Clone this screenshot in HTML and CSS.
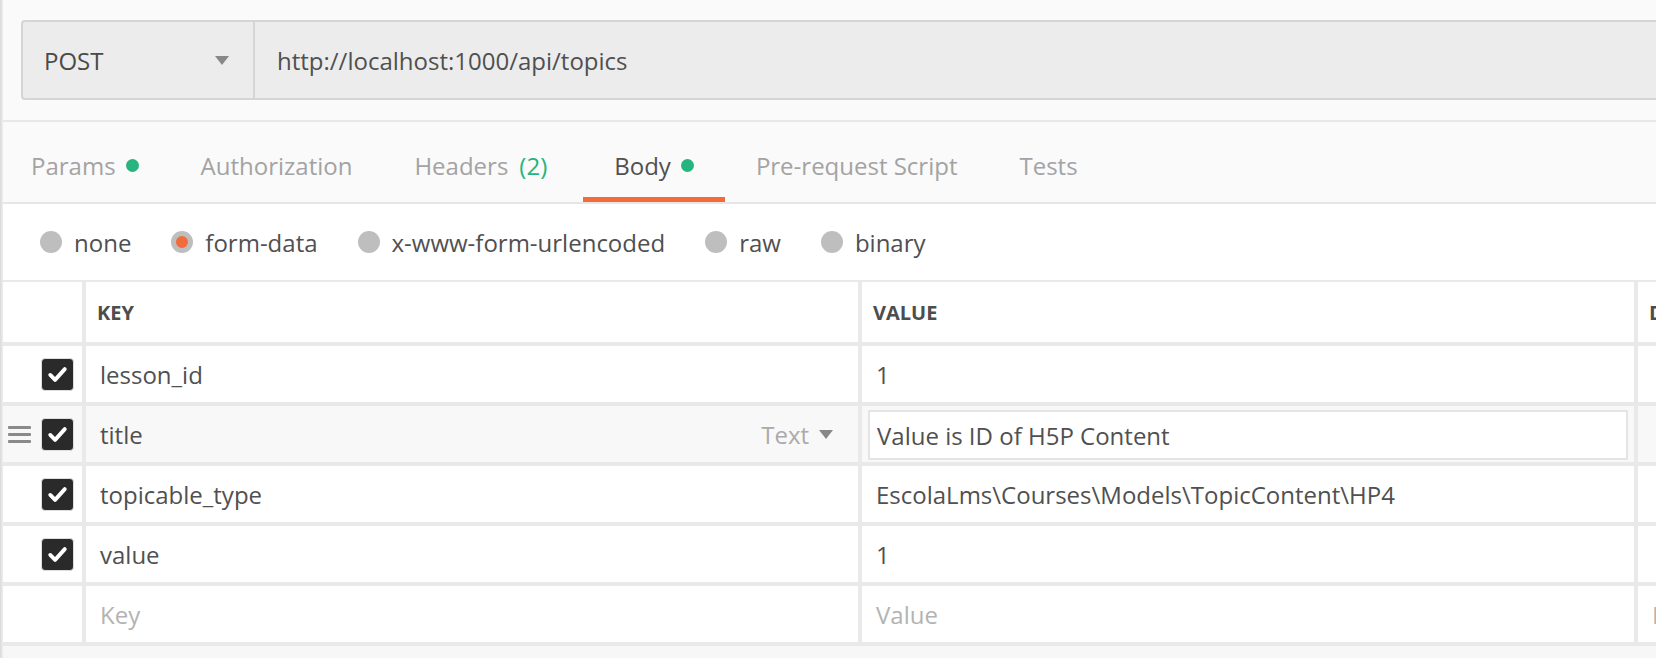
FILE: index.html
```html
<!DOCTYPE html>
<html>
<head>
<meta charset="utf-8">
<link rel="stylesheet" href="styles.css">
</head>
<body>
<div class="app">
  <div class="edge"></div>
  <div class="main">
    <div class="top">
      <div class="urlbar">
        <div class="method"><span>POST</span><span class="caret"></span></div>
        <div class="url">http://localhost:1000/api/topics</div>
      </div>
    </div>
    <div class="tabs">
      <div class="tab">Params<span class="dot"></span></div>
      <div class="tab">Authorization</div>
      <div class="tab headers">Headers<span class="count">(2)</span></div>
      <div class="tab active">Body<span class="dot"></span></div>
      <div class="tab">Pre-request Script</div>
      <div class="tab">Tests</div>
    </div>
    <div class="modes">
      <div class="mode"><span class="radio"></span>none</div>
      <div class="mode"><span class="radio on"></span>form-data</div>
      <div class="mode"><span class="radio"></span>x-www-form-urlencoded</div>
      <div class="mode"><span class="radio"></span>raw</div>
      <div class="mode"><span class="radio"></span>binary</div>
    </div>
    <div class="kv">
      <div class="cell head check"></div>
      <div class="cell head">KEY</div>
      <div class="cell head">VALUE</div>
      <div class="cell head">DESCRIPTION</div>

      <div class="cell check"><span class="cb"><svg viewBox="0 0 32 32"><path d="M8.5 16.5 L13.5 21.5 L23.5 10.5"/></svg></span></div>
      <div class="cell">lesson_id</div>
      <div class="cell">1</div>
      <div class="cell"></div>

      <div class="cell check hl"><span class="drag"><i></i><i></i><i></i></span><span class="cb"><svg viewBox="0 0 32 32"><path d="M8.5 16.5 L13.5 21.5 L23.5 10.5"/></svg></span></div>
      <div class="cell hl keycell"><span>title</span><span class="type">Text<span class="caret small"></span></span></div>
      <div class="cell hl valcell"><div class="input">Value is ID of H5P Content</div></div>
      <div class="cell hl"></div>

      <div class="cell check"><span class="cb"><svg viewBox="0 0 32 32"><path d="M8.5 16.5 L13.5 21.5 L23.5 10.5"/></svg></span></div>
      <div class="cell">topicable_type</div>
      <div class="cell">EscolaLms\Courses\Models\TopicContent\HP4</div>
      <div class="cell"></div>

      <div class="cell check"><span class="cb"><svg viewBox="0 0 32 32"><path d="M8.5 16.5 L13.5 21.5 L23.5 10.5"/></svg></span></div>
      <div class="cell">value</div>
      <div class="cell">1</div>
      <div class="cell"></div>

      <div class="cell check"></div>
      <div class="cell ph">Key</div>
      <div class="cell ph">Value</div>
      <div class="cell ph">Description</div>
    </div>
    <div class="footer"></div>
  </div>
</div>
</body>
</html>
```
FILE: styles.css
```css
html, body {
  margin: 0;
  padding: 0;
  height: 100%;
}
body {
  font-family: "Open Sans", "Liberation Sans", sans-serif;
  font-size: 24px;
  color: #505050;
  background: #f7f7f7;
}
.app {
  display: flex;
  min-height: 100vh;
  overflow: hidden;
}
.edge {
  width: 3px;
  flex: none;
  background: linear-gradient(to right, #d9d9d9, #efefef);
}
.main {
  flex: 1;
  min-width: 0;
  overflow: hidden;
  display: flex;
  flex-direction: column;
}
.top {
  background: #fafafa;
  padding: 20px 0 20px 18px;
  border-bottom: 2px solid #e8e8e8;
}
.urlbar {
  display: flex;
  height: 76px;
  border: 2px solid #d5d5d5;
  border-right: none;
  border-radius: 4px 0 0 4px;
  background: #ececec;
  margin-right: -10px;
}
.method {
  flex: none;
  display: flex;
  align-items: center;
  justify-content: space-between;
  padding: 0 24px 0 21px;
  border-right: 2px solid #d5d5d5;
  color: #4a4a4a;
  box-sizing: content-box;
  width: 185px;
}
.caret {
  width: 0;
  height: 0;
  border-left: 7px solid transparent;
  border-right: 7px solid transparent;
  border-top: 9px solid #888;
}
.url {
  display: flex;
  align-items: center;
  padding-left: 22px;
  color: #505050;
}
.tabs {
  display: flex;
  background: #fafafa;
  border-bottom: 2px solid #e6e6e6;
  box-sizing: border-box;
  height: 82px;
}
.tab {
  display: flex;
  align-items: center;
  padding: 12px 31px 0;
  color: #a3a3a3;
  border-bottom: 5px solid transparent;
  white-space: pre;
}
.tab:first-child {
  padding-left: 28px;
}
.tab.headers {
  padding-right: 36px;
}
.tab.active {
  color: #505050;
  border-bottom-color: #f26b3a;
}
.dot {
  width: 13px;
  height: 13px;
  border-radius: 50%;
  background: #26b47f;
  margin-left: 10px;
}
.count {
  color: #26b47f;
  margin-left: 11px;
}
.modes {
  display: flex;
  align-items: center;
  height: 76px;
  background: #fff;
  padding-left: 37px;
  gap: 40px;
}
.mode {
  display: flex;
  align-items: center;
  color: #505050;
}
.radio {
  width: 22px;
  height: 22px;
  border-radius: 50%;
  background: #bebebe;
  margin-right: 12px;
  box-sizing: border-box;
}
.radio.on {
  background: #f26b3a;
  border: 5px solid #bebebe;
}
.kv {
  display: grid;
  grid-template-columns: 79px 772px 772px 400px;
  grid-template-rows: 60px repeat(5, 56px);
  gap: 4px;
  background: #e9e9e9;
  border-top: 2px solid #e9e9e9;
  border-bottom: 4px solid #e9e9e9;
  width: 2039px;
}
.cell {
  background: #fff;
  display: flex;
  align-items: center;
  padding-left: 14px;
  white-space: nowrap;
  overflow: hidden;
}
.cell.head {
  font-weight: 700;
  font-size: 20px;
  padding-left: 11px;
  color: #4d4d4d;
}
.cell.check {
  padding-left: 0;
  justify-content: flex-end;
  padding-right: 8px;
}
.cell.hl {
  background: #f8f8f8;
}
.cell.ph {
  color: #b3b3b3;
}
.cb {
  width: 33px;
  height: 33px;
  box-sizing: border-box;
  border-radius: 4px;
  background: #2a2a2a;
  border: 1px solid #dedede;
  display: flex;
}
.cb svg {
  width: 31px;
  height: 31px;
}
.cb path {
  fill: none;
  stroke: #fff;
  stroke-width: 4;
  stroke-linecap: round;
  stroke-linejoin: round;
}
.cell.check.hl {
  justify-content: space-between;
  padding-left: 5px;
}
.drag {
  display: flex;
  flex-direction: column;
  gap: 4px;
  width: 23px;
}
.drag i {
  display: block;
  height: 3px;
  background: #8a8a8a;
  border-radius: 1px;
}
.keycell {
  justify-content: space-between;
  padding-right: 25px;
}
.type {
  display: flex;
  align-items: center;
  color: #aaa;
}
.caret.small {
  margin-left: 10px;
}
.valcell {
  padding: 4px 6px 2px 6px;
  align-items: stretch;
}
.input {
  flex: 1;
  background: #fff;
  border: 2px solid #e4e4e4;
  display: flex;
  align-items: center;
  padding-left: 7px;
}
.footer {
  flex: 1;
  background: #f7f7f7;
}
```
